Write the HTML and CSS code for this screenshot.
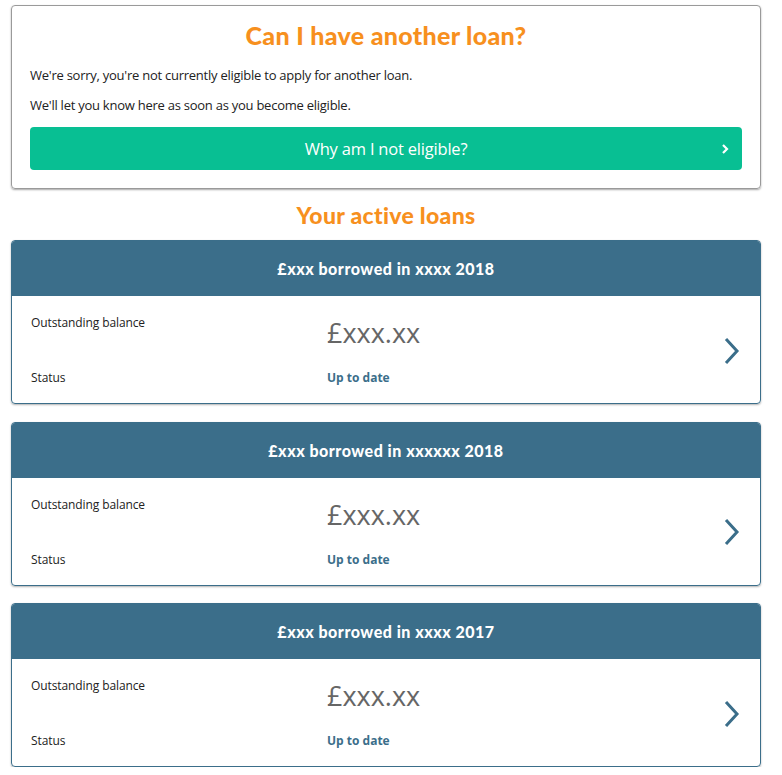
FILE: index.html
```html
<!DOCTYPE html>
<html>
<head>
<meta charset="utf-8">
<link rel="stylesheet" href="styles.css">
</head>
<body>
<div class="page">
  <section class="eligibility">
    <h1 class="title">Can I have another loan?</h1>
    <p class="text">We're sorry, you're not currently eligible to apply for another loan.</p>
    <p class="text">We'll let you know here as soon as you become eligible.</p>
    <a class="why-btn" href="#">
      <span class="why-label">Why am I not eligible?</span>
      <svg class="why-chev" width="8" height="12" viewBox="0 0 8 12"><path d="M2 2 L6 6 L2 10" fill="none" stroke="#fff" stroke-width="2.2"/></svg>
    </a>
  </section>

  <h2 class="section-title">Your active loans</h2>

  <div class="loans">
    <article class="loan">
      <header class="loan-head">£xxx borrowed in xxxx 2018</header>
      <div class="loan-body">
        <div class="loan-grid">
          <div class="label">Outstanding balance</div>
          <div class="amount">£xxx.xx</div>
          <div class="label label-status">Status</div>
          <div class="status">Up to date</div>
        </div>
        <svg class="loan-chev" width="20" height="28" viewBox="0 0 20 28"><path d="M4 2 L15 14 L4 26" fill="none" stroke="#3b6e8a" stroke-width="3"/></svg>
      </div>
    </article>
    <article class="loan">
      <header class="loan-head">£xxx borrowed in xxxxxx 2018</header>
      <div class="loan-body">
        <div class="loan-grid">
          <div class="label">Outstanding balance</div>
          <div class="amount">£xxx.xx</div>
          <div class="label label-status">Status</div>
          <div class="status">Up to date</div>
        </div>
        <svg class="loan-chev" width="20" height="28" viewBox="0 0 20 28"><path d="M4 2 L15 14 L4 26" fill="none" stroke="#3b6e8a" stroke-width="3"/></svg>
      </div>
    </article>
    <article class="loan">
      <header class="loan-head">£xxx borrowed in xxxx 2017</header>
      <div class="loan-body">
        <div class="loan-grid">
          <div class="label">Outstanding balance</div>
          <div class="amount">£xxx.xx</div>
          <div class="label label-status">Status</div>
          <div class="status">Up to date</div>
        </div>
        <svg class="loan-chev" width="20" height="28" viewBox="0 0 20 28"><path d="M4 2 L15 14 L4 26" fill="none" stroke="#3b6e8a" stroke-width="3"/></svg>
      </div>
    </article>
  </div>
</div>
</body>
</html>
```

FILE: styles.css
```css
* { box-sizing: border-box; }
html, body { margin: 0; padding: 0; background: #fff; }
body { font-family: "Open Sans", "Liberation Sans", sans-serif; color: #222; }

.page {
  width: 750px;
  margin-left: 11px;
  padding-top: 5px;
}

.eligibility {
  border: 1px solid #9a9a9a;
  border-radius: 4px;
  box-shadow: 0 1px 2px rgba(0,0,0,0.35);
  padding: 15px 18px 18px 18px;
}

.title {
  margin: 0 0 17px 0;
  text-align: center;
  color: #f7901e;
  font-family: "Lato", "Liberation Sans", sans-serif;
  font-weight: 900;
  font-size: 25px;
  letter-spacing: 0.3px;
  line-height: 28px;
}

.text {
  margin: 0 0 12px 0;
  font-size: 13px;
  line-height: 18px;
  letter-spacing: -0.25px;
}

.why-btn {
  display: flex;
  align-items: center;
  justify-content: center;
  position: relative;
  height: 43px;
  margin-top: 13px;
  background: #08bf93;
  border-radius: 4px;
  text-decoration: none;
  color: #fff;
}
.why-label {
  font-size: 16.5px;
  letter-spacing: -0.2px;
}
.why-chev {
  position: absolute;
  right: 13px;
  top: 16px;
}

.section-title {
  margin: 12px 0 11px 0;
  text-align: center;
  color: #f7901e;
  font-family: "Lato", "Liberation Sans", sans-serif;
  font-weight: 900;
  font-size: 23px;
  letter-spacing: 0.3px;
  line-height: 28px;
}

.loans {
  display: flex;
  flex-direction: column;
  gap: 17.5px;
}

.loan {
  border: 1px solid #3b6e8a;
  border-radius: 4px;
  overflow: hidden;
  box-shadow: 0 1px 2px rgba(0,0,0,0.3);
}

.loan-head {
  background: #3b6e8a;
  color: #fff;
  height: 55px;
  display: flex;
  align-items: center;
  justify-content: center;
  font-family: "Lato", "Liberation Sans", sans-serif;
  font-weight: 900;
  font-size: 16px;
  letter-spacing: 0.5px;
}

.loan-body {
  height: 107px;
  display: flex;
  align-items: center;
  padding: 0 18px 0 19px;
}

.loan-grid {
  flex: 1;
  display: grid;
  grid-template-columns: 296px 1fr;
  grid-template-rows: 46px 26px;
  align-self: flex-start;
  padding-top: 18px;
}

.label {
  font-size: 12px;
  color: #222;
  letter-spacing: -0.1px;
}
.label-status { align-self: end; }

.amount {
  font-size: 27px;
  color: #666;
  line-height: 38px;
  font-family: "Open Sans", sans-serif;
}

.status {
  align-self: end;
  font-size: 12px;
  font-weight: 700;
  color: #3b6e8a;
}

.loan-chev { flex: none; margin-top: 2px; }
```
